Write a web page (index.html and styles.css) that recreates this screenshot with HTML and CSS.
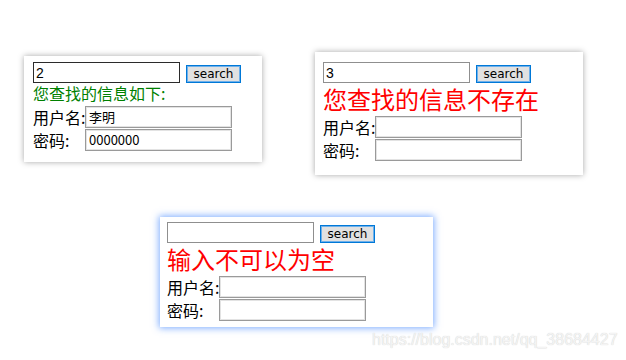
FILE: index.html
```html
<!DOCTYPE html>
<html lang="zh-CN">
<head>
<meta charset="utf-8">
<title>查询</title>
<link rel="stylesheet" href="styles.css">
</head>
<body>
<div class="canvas">
  <div class="row-top">
    <div class="card card-one">
      <div class="search-row">
        <input class="search-input focused" type="text" value="2">
        <button class="search-btn" type="button">search</button>
      </div>
      <div class="msg msg-ok">您查找的信息如下:</div>
      <div class="field"><span class="label">用户名:</span><input class="field-input" type="text" value="李明"></div>
      <div class="field"><span class="label">密码:</span><input class="field-input" type="text" value="0000000"></div>
    </div>
    <div class="card card-two">
      <div class="search-row">
        <input class="search-input" type="text" value="3">
        <button class="search-btn" type="button">search</button>
      </div>
      <div class="msg msg-err">您查找的信息不存在</div>
      <div class="field"><span class="label">用户名:</span><input class="field-input" type="text" value=""></div>
      <div class="field"><span class="label">密码:</span><input class="field-input" type="text" value=""></div>
    </div>
  </div>
  <div class="row-bottom">
    <div class="card card-three">
      <div class="search-row">
        <input class="search-input" type="text" value="">
        <button class="search-btn" type="button">search</button>
      </div>
      <div class="msg msg-err">输入不可以为空</div>
      <div class="field"><span class="label">用户名:</span><input class="field-input" type="text" value=""></div>
      <div class="field"><span class="label">密码:</span><input class="field-input" type="text" value=""></div>
    </div>
  </div>
  <div class="watermark">https://blog.csdn.net/qq_38684427</div>
</div>
</body>
</html>
```
FILE: styles.css
```css
html, body {
  margin: 0;
  padding: 0;
  background: #ffffff;
}

.canvas {
  position: relative;
  width: 626px;
  height: 360px;
  overflow: hidden;
  font-family: "Noto Sans CJK SC", "Liberation Sans", sans-serif;
  color: #000;
}

.row-top {
  display: flex;
  align-items: flex-start;
  padding-top: 52px;
}

.row-bottom {
  display: flex;
  margin-top: 42px;
  padding-left: 160px;
}

.card {
  background: #fff;
  box-sizing: border-box;
}

.card-one {
  width: 238px;
  height: 106px;
  margin-top: 4px;
  margin-left: 24px;
  padding: 6px 0 0 9px;
  box-shadow: 0 0 6px rgba(0, 0, 0, 0.35);
}

.card-two {
  width: 268px;
  height: 123px;
  margin-left: 53px;
  padding: 10px 0 0 8px;
  box-shadow: 0 0 6px rgba(0, 0, 0, 0.35);
}

.card-three {
  width: 273px;
  height: 110px;
  padding: 5px 0 0 7px;
  box-shadow: 0 0 7px 1px rgba(90, 150, 255, 0.8);
}

.search-row {
  display: flex;
  align-items: center;
  gap: 6px;
  height: 21px;
}

.search-input {
  box-sizing: border-box;
  width: 147px;
  height: 21px;
  margin: 0;
  padding: 0 2px;
  border: 1px solid #8f8f8f;
  background: #fff;
  font-family: "Liberation Sans", sans-serif;
  font-size: 14px;
  color: #000;
  outline: none;
}

.search-input.focused {
  border: 1px solid #2b2b2b;
}

.search-btn {
  box-sizing: border-box;
  width: 55px;
  height: 18px;
  margin: 2px 0 0 0;
  padding: 0;
  border: 1px solid #0078d7;
  box-shadow: inset 0 0 0 1px #6fb0ea;
  background: #e1e1e1;
  font-family: "DejaVu Sans", sans-serif;
  font-size: 12px;
  line-height: 14px;
  color: #000;
}

.msg {
  white-space: nowrap;
}

.msg-ok {
  color: #008000;
  font-size: 16px;
  line-height: 21px;
  height: 22px;
}

.msg-err {
  color: #ff0000;
  font-size: 24px;
  line-height: 32px;
  height: 32px;
}

.field {
  display: flex;
  align-items: center;
  height: 23px;
}

.label {
  width: 52px;
  font-size: 16px;
  line-height: 22px;
  white-space: nowrap;
}

.field-input {
  box-sizing: border-box;
  width: 147px;
  height: 22px;
  margin: 0;
  padding: 0 3px;
  border: 1px solid #9a9a9a;
  box-shadow: inset 0 0 0 1px #e3e3e3;
  background: #fff;
  font-family: "Noto Sans CJK SC", "Liberation Sans", sans-serif;
  font-size: 13px;
  color: #000;
  outline: none;
}

.watermark {
  position: absolute;
  left: 372px;
  top: 331px;
  font-family: "Liberation Sans", sans-serif;
  font-size: 16px;
  color: #f4f4f4;
  text-shadow: 0 0 1px #c8c8c8;
  white-space: nowrap;
}
```
